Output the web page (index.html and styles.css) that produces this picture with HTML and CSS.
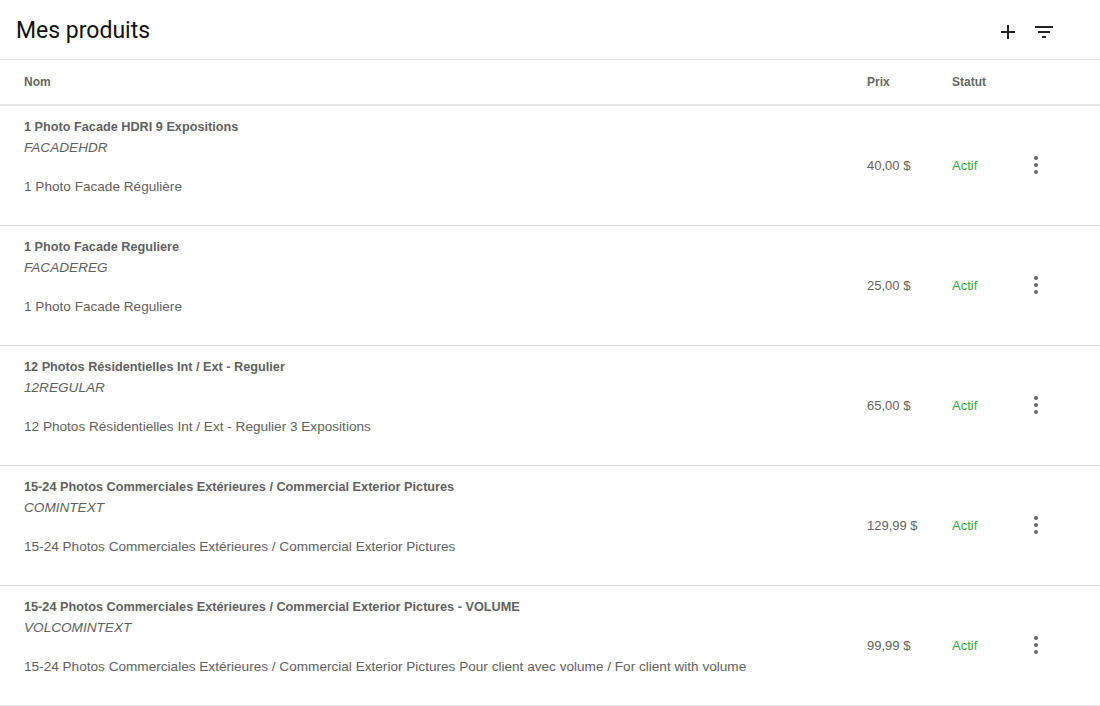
FILE: index.html
```html
<!DOCTYPE html>
<html lang="fr">
<head>
<meta charset="utf-8">
<title>Mes produits</title>
<link rel="stylesheet" href="styles.css">
</head>
<body>
<div class="page">
  <header class="topbar">
    <h1 class="title">Mes produits</h1>
    <div class="actions">
      <button class="icon-btn" aria-label="Ajouter">
        <svg width="24" height="24" viewBox="0 0 24 24"><path d="M19 13h-6v6h-2v-6H5v-2h6V5h2v6h6v2z" fill="#222"/></svg>
      </button>
      <button class="icon-btn" aria-label="Filtrer">
        <svg width="24" height="24" viewBox="0 0 24 24"><path d="M10 18h4v-2h-4v2zM3 6v2h18V6H3zm3 7h12v-2H6v2z" fill="#222"/></svg>
      </button>
    </div>
  </header>
  <table class="products">
    <thead>
      <tr>
        <th class="c-name">Nom</th>
        <th class="c-price">Prix</th>
        <th class="c-status">Statut</th>
        <th class="c-menu"></th>
      </tr>
    </thead>
    <tbody>
      <tr>
        <td class="c-name">
          <div class="p-name">1 Photo Facade HDRI 9 Expositions</div>
          <div class="p-code">FACADEHDR</div>
          <div class="p-desc">1 Photo Facade Régulière</div>
        </td>
        <td class="c-price">40,00 $</td>
        <td class="c-status"><span class="active">Actif</span></td>
        <td class="c-menu"><span class="dots"><i></i><i></i><i></i></span></td>
      </tr>
      <tr>
        <td class="c-name">
          <div class="p-name">1 Photo Facade Reguliere</div>
          <div class="p-code">FACADEREG</div>
          <div class="p-desc">1 Photo Facade Reguliere</div>
        </td>
        <td class="c-price">25,00 $</td>
        <td class="c-status"><span class="active">Actif</span></td>
        <td class="c-menu"><span class="dots"><i></i><i></i><i></i></span></td>
      </tr>
      <tr>
        <td class="c-name">
          <div class="p-name">12 Photos Résidentielles Int / Ext - Regulier</div>
          <div class="p-code">12REGULAR</div>
          <div class="p-desc">12 Photos Résidentielles Int / Ext - Regulier 3 Expositions</div>
        </td>
        <td class="c-price">65,00 $</td>
        <td class="c-status"><span class="active">Actif</span></td>
        <td class="c-menu"><span class="dots"><i></i><i></i><i></i></span></td>
      </tr>
      <tr>
        <td class="c-name">
          <div class="p-name">15-24 Photos Commerciales Extérieures / Commercial Exterior Pictures</div>
          <div class="p-code">COMINTEXT</div>
          <div class="p-desc">15-24 Photos Commerciales Extérieures / Commercial Exterior Pictures</div>
        </td>
        <td class="c-price">129,99 $</td>
        <td class="c-status"><span class="active">Actif</span></td>
        <td class="c-menu"><span class="dots"><i></i><i></i><i></i></span></td>
      </tr>
      <tr>
        <td class="c-name">
          <div class="p-name">15-24 Photos Commerciales Extérieures / Commercial Exterior Pictures - VOLUME</div>
          <div class="p-code">VOLCOMINTEXT</div>
          <div class="p-desc">15-24 Photos Commerciales Extérieures / Commercial Exterior Pictures Pour client avec volume / For client with volume</div>
        </td>
        <td class="c-price">99,99 $</td>
        <td class="c-status"><span class="active">Actif</span></td>
        <td class="c-menu"><span class="dots"><i></i><i></i><i></i></span></td>
      </tr>
    </tbody>
  </table>
</div>
</body>
</html>
```
FILE: styles.css
```css
* { box-sizing: border-box; }
html, body { margin: 0; padding: 0; background: #fff; }
body { font-family: "Liberation Sans", Arial, sans-serif; color: #616161; }

.page { width: 1100px; }

.topbar {
  height: 60px;
  display: flex;
  align-items: center;
  justify-content: space-between;
  padding: 0 44px 0 16px;
  border-bottom: 1px solid #e0e0e0;
}
.title {
  margin: 0;
  font-family: Roboto, "Liberation Sans", sans-serif;
  font-weight: 400;
  font-size: 23px;
  color: #111;
  position: relative;
  top: 1px;
}
.actions { display: flex; gap: 12px; align-items: center; padding-top: 4px; }
.icon-btn {
  border: 0; background: none; padding: 0; margin: 0;
  width: 24px; height: 24px; display: flex; cursor: pointer;
}

.products { width: 100%; border-collapse: collapse; }
.products th {
  height: 45px;
  text-align: left;
  font-size: 12px;
  font-weight: 700;
  color: #666;
  border-bottom: 2px solid #e6e6e6;
  padding: 0;
}
.products td {
  height: 120px;
  border-bottom: 1px solid #e0e0e0;
  padding: 0;
  vertical-align: middle;
  font-size: 13px;
}
.c-name { padding-left: 24px !important; }
.products td.c-name { vertical-align: top; padding-top: 11px !important; }
.c-price { width: 85px; }
.c-status { width: 75px; }
.c-menu { width: 73px; }

.p-name { font-size: 12.7px; font-weight: 700; color: #616161; line-height: 20px; }
.p-code { font-size: 13.6px; font-style: italic; color: #616161; line-height: 21px; }
.p-desc { font-size: 13.6px; color: #616161; line-height: 20px; margin-top: 19px; }

.active { color: #3ca83a; }

.dots { display: flex; flex-direction: column; gap: 3px; width: 4px; margin-left: 7px; }
.dots i { display: block; width: 4px; height: 4px; border-radius: 50%; background: #666; }
```
